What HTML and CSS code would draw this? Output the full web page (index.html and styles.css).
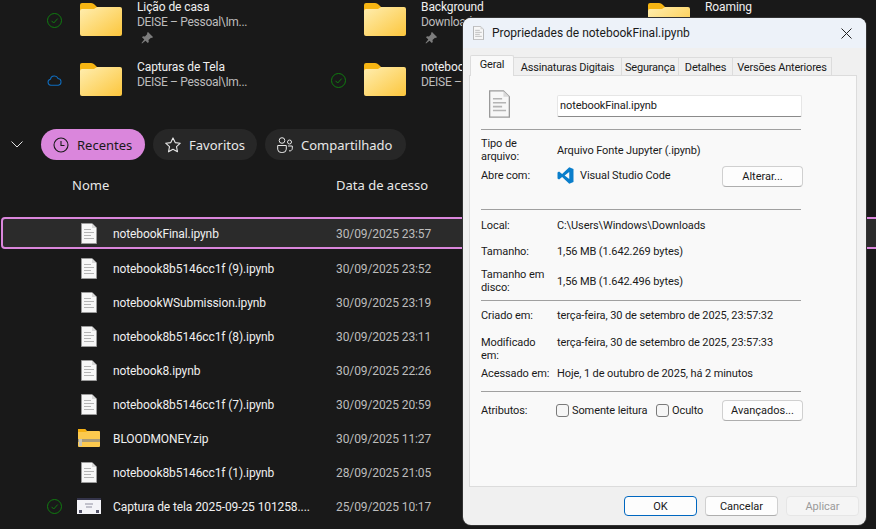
FILE: index.html
```html
<!DOCTYPE html>
<html lang="pt-BR">
<head>
    <meta charset="UTF-8">
    <meta name="viewport" content="width=device-width, initial-scale=1.0">
    <title>Propriedades de notebookFinal.ipynb</title>
    <link rel="stylesheet" href="styles.css">
</head>
<body>
    <!-- icones reutilizados -->
    <svg class="defs" width="0" height="0">
        <defs>
            <linearGradient id="folderFill" x1="0" y1="0" x2="1" y2="1">
                <stop offset="0" stop-color="#ffeeb0"/>
                <stop offset="1" stop-color="#fcc63c"/>
            </linearGradient>
            <symbol id="folder" viewBox="0 0 42 33">
                <path d="M0 2a2 2 0 0 1 2-2h9c2 0 3 1 4.500 2.500L17 4v6H0z" fill="#f6b513"/>
                <path d="M0 8a2 2 0 0 1 2-2l12 0 3-2h23a2 2 0 0 1 2 2v25a2 2 0 0 1-2 2H2a2 2 0 0 1-2-2z" fill="url(#folderFill)"/>
            </symbol>
            <symbol id="doc" viewBox="0 0 16 21">
                <path d="M.5.500h10.500l4.500 4.500v15.500H.5z" fill="#f7f7f7" stroke="#9a9a9a"/>
                <path d="M11 .5v4.500h4.500z" fill="#d8d8d8"/>
                <path d="M3 6.500h7M3 9.500h10M3 12.500h7M3 15.500h10" stroke="#b4b4b4" stroke-width="1.200"/>
            </symbol>
            <symbol id="synced" viewBox="0 0 15 15">
                <circle cx="7.500" cy="7.500" r="7" fill="none" stroke="#107c10"/>
                <path d="M4.500 7.800l2.200 2.200 4-4.400" fill="none" stroke="#107c10"/>
            </symbol>
            <symbol id="pin" viewBox="0 0 12 12">
                <path d="M7 0l5 5-1 1-1-.3-2.500 2.300.3 2-1 1-2.300-2.300L1 11.500l-.5-.5 2.800-3.500L1 5.200l1-1 2 .3L6.300 2 6 1z" fill="#7d7d7d"/>
            </symbol>
        </defs>
    </svg>

    <!-- pastas fixadas -->
    <section class="quick-grid">
        <div class="quick-item">
            <svg class="status"><use href="#synced"/></svg>
            <svg class="folder"><use href="#folder"/></svg>
            <div class="quick-text">
                <div class="quick-title">Lição de casa</div>
                <div class="quick-sub">DEISE – Pessoal\Im...</div>
                <svg class="pin"><use href="#pin"/></svg>
            </div>
        </div>
        <div class="quick-item">
            <span class="status"></span>
            <svg class="folder"><use href="#folder"/></svg>
            <div class="quick-text">
                <div class="quick-title">Background</div>
                <div class="quick-sub">Downloads</div>
                <svg class="pin"><use href="#pin"/></svg>
            </div>
        </div>
        <div class="quick-item">
            <span class="status"></span>
            <svg class="folder"><use href="#folder"/></svg>
            <div class="quick-text">
                <div class="quick-title">Roaming</div>
            </div>
        </div>
        <div class="quick-item">
            <svg class="status" viewBox="0 0 16 15">
                <path d="M4 12.500a3.200 3.200 0 0 1-.4-6.300 4.300 4.300 0 0 1 8.200-.8 3.600 3.600 0 0 1 .3 7.100z" fill="none" stroke="#0f6cbd" stroke-width="1.100"/>
            </svg>
            <svg class="folder"><use href="#folder"/></svg>
            <div class="quick-text">
                <div class="quick-title">Capturas de Tela</div>
                <div class="quick-sub">DEISE – Pessoal\Im...</div>
            </div>
        </div>
        <div class="quick-item">
            <svg class="status"><use href="#synced"/></svg>
            <svg class="folder"><use href="#folder"/></svg>
            <div class="quick-text">
                <div class="quick-title">notebooks</div>
                <div class="quick-sub">DEISE – Pessoal\Im...</div>
            </div>
        </div>
    </section>

    <!-- filtros -->
    <nav class="chips">
        <svg class="chevron" viewBox="0 0 12 7"><path d="M.5.500L6 6l5.500-5.500" fill="none" stroke="#e4e4e4"/></svg>
        <button class="chip chip-recent chip-active">
            <svg class="chip-icon" viewBox="0 0 16 16"><circle cx="8" cy="8" r="7" fill="none" stroke="currentColor" stroke-width="1.100"/><path d="M8 4v4.500h3.500" fill="none" stroke="currentColor" stroke-width="1.100"/></svg>
            Recentes
        </button>
        <button class="chip chip-fav">
            <svg class="chip-icon" viewBox="0 0 16 16"><path d="M8 .9l2.200 4.700 5.100.6-3.800 3.500 1 5.100L8 12.300l-4.500 2.500 1-5.100L.7 6.200l5.100-.6z" fill="none" stroke="currentColor" stroke-width="1.100" stroke-linejoin="round"/></svg>
            Favoritos
        </button>
        <button class="chip chip-shared">
            <svg class="chip-icon" viewBox="0 0 16 16"><circle cx="5" cy="3.500" r="2.800" fill="none" stroke="currentColor"/><circle cx="12.500" cy="5" r="2" fill="none" stroke="currentColor"/><path d="M.7 8.500h8.600v3.700a3.500 3.500 0 0 1-3.500 3.300H4.200a3.500 3.500 0 0 1-3.500-3.300zM11 9h4.300v2.200a2.500 2.500 0 0 1-3.300 2.600" fill="none" stroke="currentColor"/></svg>
            Compartilhado
        </button>
    </nav>

    <!-- lista de arquivos -->
    <div class="list-head">
        <span class="head-name">Nome</span>
        <span>Data de acesso</span>
    </div>
    <div class="file-list">
        <div class="file-row file-selected">
            <span class="status"></span>
            <span class="file-icon"><svg class="doc"><use href="#doc"/></svg></span>
            <span class="file-name">notebookFinal.ipynb</span>
            <span class="file-date">30/09/2025 23:57</span>
        </div>
        <div class="file-row">
            <span class="status"></span>
            <span class="file-icon"><svg class="doc"><use href="#doc"/></svg></span>
            <span class="file-name">notebook8b5146cc1f (9).ipynb</span>
            <span class="file-date">30/09/2025 23:52</span>
        </div>
        <div class="file-row">
            <span class="status"></span>
            <span class="file-icon"><svg class="doc"><use href="#doc"/></svg></span>
            <span class="file-name">notebookWSubmission.ipynb</span>
            <span class="file-date">30/09/2025 23:19</span>
        </div>
        <div class="file-row">
            <span class="status"></span>
            <span class="file-icon"><svg class="doc"><use href="#doc"/></svg></span>
            <span class="file-name">notebook8b5146cc1f (8).ipynb</span>
            <span class="file-date">30/09/2025 23:11</span>
        </div>
        <div class="file-row">
            <span class="status"></span>
            <span class="file-icon"><svg class="doc"><use href="#doc"/></svg></span>
            <span class="file-name">notebook8.ipynb</span>
            <span class="file-date">30/09/2025 22:26</span>
        </div>
        <div class="file-row">
            <span class="status"></span>
            <span class="file-icon"><svg class="doc"><use href="#doc"/></svg></span>
            <span class="file-name">notebook8b5146cc1f (7).ipynb</span>
            <span class="file-date">30/09/2025 20:59</span>
        </div>
        <div class="file-row">
            <span class="status"></span>
            <span class="file-icon">
                <svg class="zip" viewBox="0 0 22 18">
                    <path d="M0 1a1 1 0 0 1 1-1h6l2 2h12a1 1 0 0 1 1 1v14a1 1 0 0 1-1 1H1a1 1 0 0 1-1-1z" fill="#fcc94e"/>
                    <path d="M0 0h7l2 3H0z" fill="#f5b013"/>
                    <path d="M0 10h22v3H0z" fill="#a89a78"/>
                    <path d="M1 10h3v7H1z" fill="#c9c4b4"/>
                </svg>
            </span>
            <span class="file-name">BLOODMONEY.zip</span>
            <span class="file-date">30/09/2025 11:27</span>
        </div>
        <div class="file-row">
            <span class="status"></span>
            <span class="file-icon"><svg class="doc"><use href="#doc"/></svg></span>
            <span class="file-name">notebook8b5146cc1f (1).ipynb</span>
            <span class="file-date">28/09/2025 21:05</span>
        </div>
        <div class="file-row">
            <svg class="status"><use href="#synced"/></svg>
            <span class="file-icon">
                <svg class="thumb" viewBox="0 0 24 16">
                    <path d="M0 0h24v16H0z" fill="#f4f4f8"/>
                    <path d="M0 0h24v2H0z" fill="#34344a"/>
                    <path d="M2 12h3v3H2zM19 12h3v3h-3z" fill="#55556a"/>
                    <path d="M8 5h8v2H8zM9 8h6v2H9z" fill="#c2c2cc"/>
                </svg>
            </span>
            <span class="file-name">Captura de tela 2025-09-25 101258....</span>
            <span class="file-date">25/09/2025 10:17</span>
        </div>
    </div>

    <!-- janela de propriedades -->
    <div class="dialog">
        <div class="title-bar">
            <svg class="title-icon"><use href="#doc"/></svg>
            <span class="title-text">Propriedades de notebookFinal.ipynb</span>
            <svg class="close" viewBox="0 0 11 11"><path d="M.5.500l10 10M10.500.500l-10 10" stroke="#222" fill="none"/></svg>
        </div>
        <div class="tabs">
            <div class="tab tab-active">Geral</div>
            <div class="tab tab-sign">Assinaturas Digitais</div>
            <div class="tab tab-sec">Segurança</div>
            <div class="tab tab-det">Detalhes</div>
            <div class="tab tab-ver">Versões Anteriores</div>
        </div>
        <div class="panel">
            <div class="name-row">
                <svg class="big-doc"><use href="#doc"/></svg>
                <div class="name-input">notebookFinal.ipynb</div>
            </div>
            <hr class="sep sep-1">
            <div class="prop prop-type">
                <span class="prop-label">Tipo de arquivo:</span>
                <span>Arquivo Fonte Jupyter (.ipynb)</span>
            </div>
            <div class="prop prop-opens">
                <span class="prop-label">Abre com:</span>
                <span class="app">
                    <svg class="vscode" viewBox="0 0 100 100">
                        <path d="M72 2L30 41 12 27 3 32v36l9 5 18-14 42 39 25-10V12zM72 29v42L45 50z" fill="#0a7ecb" fill-rule="evenodd"/>
                    </svg>
                    Visual Studio Code
                </span>
                <button class="btn btn-side">Alterar...</button>
            </div>
            <hr class="sep sep-2">
            <div class="prop prop-local">
                <span class="prop-label">Local:</span>
                <span>C:\Users\Windows\Downloads</span>
            </div>
            <div class="prop prop-size">
                <span class="prop-label">Tamanho:</span>
                <span>1,56 MB (1.642.269 bytes)</span>
            </div>
            <div class="prop prop-disk">
                <span class="prop-label">Tamanho em disco:</span>
                <span>1,56 MB (1.642.496 bytes)</span>
            </div>
            <hr class="sep sep-3">
            <div class="prop prop-created">
                <span class="prop-label">Criado em:</span>
                <span>terça-feira, 30 de setembro de 2025, 23:57:32</span>
            </div>
            <div class="prop prop-modified">
                <span class="prop-label">Modificado em:</span>
                <span>terça-feira, 30 de setembro de 2025, 23:57:33</span>
            </div>
            <div class="prop prop-accessed">
                <span class="prop-label">Acessado em:</span>
                <span>Hoje, 1 de outubro de 2025, há 2 minutos</span>
            </div>
            <hr class="sep sep-4">
            <div class="prop prop-attrs">
                <span class="prop-label">Atributos:</span>
                <span class="checks">
                    <span class="check check-read"><i class="box"></i>Somente leitura</span>
                    <span class="check"><i class="box"></i>Oculto</span>
                </span>
                <button class="btn btn-side">Avançados...</button>
            </div>
        </div>
        <div class="dialog-foot">
            <button class="btn btn-foot btn-default">OK</button>
            <button class="btn btn-foot">Cancelar</button>
            <button class="btn btn-foot btn-disabled">Aplicar</button>
        </div>
    </div>
</body>
</html>
```

FILE: styles.css
```css
* {
    box-sizing: border-box;
}
body {
    margin: 0;
    height: 529px;
    overflow: hidden;
    position: relative;
    background: #191919;
    color: #e8e8e8;
    font-family: "Noto Sans", sans-serif;
    font-size: 13px;
}
.defs {
    position: absolute;
}
button {
    font-family: inherit;
}
.status {
    display: block;
    flex: none;
    width: 15px;
    height: 15px;
}

/* pastas fixadas */
.quick-grid {
    display: grid;
    grid-template-columns: repeat(3, 284px);
    grid-auto-rows: 60px;
    padding-left: 47px;
    height: 120px;
}
.quick-item {
    display: flex;
    align-items: flex-start;
}
.quick-item .status {
    margin-top: 13px;
}
.folder {
    flex: none;
    width: 42px;
    height: 33px;
    margin: 3px 15px 0 18px;
}
.quick-text {
    font-family: Roboto, sans-serif;
    font-size: 12px;
    white-space: nowrap;
}
.quick-title {
    height: 14px;
    line-height: 14px;
    letter-spacing: -0.1px;
    color: #f0f0f0;
}
.quick-sub {
    line-height: 17px;
    letter-spacing: -0.3px;
    color: #bdbdbd;
}
.pin {
    display: block;
    width: 12px;
    height: 12px;
    margin: 1px 0 0 4px;
}

/* filtros */
.chips {
    display: flex;
    align-items: center;
    gap: 8px;
    margin-top: 9px;
    padding-left: 11px;
    height: 31px;
}
.chevron {
    width: 12px;
    height: 7px;
    margin-right: 10px;
}
.chip {
    display: flex;
    align-items: center;
    gap: 8px;
    height: 31px;
    padding: 0 12px;
    border: none;
    border-radius: 16px;
    background: #272727;
    color: #e8e8e8;
    font-size: 13px;
    white-space: nowrap;
}
.chip-recent,
.chip-fav {
    width: 104px;
}
.chip-shared {
    width: 141px;
}
.chip-active {
    background: #da86dc;
    color: #1a1a1a;
}
.chip-icon {
    flex: none;
    width: 16px;
    height: 16px;
}

/* lista */
.list-head {
    display: flex;
    margin-top: 17px;
    height: 16px;
    line-height: 16px;
    padding-left: 72px;
}
.head-name {
    width: 264px;
}
.file-list {
    margin-top: 24px;
    font-family: Roboto, sans-serif;
    font-size: 12px;
    letter-spacing: -0.1px;
}
.file-row {
    display: flex;
    align-items: center;
    height: 34px;
    padding-left: 47px;
    white-space: nowrap;
}
.file-selected {
    height: 32px;
    margin: 0 -10px 2px 1px;
    padding-left: 44px;
    background: #2b2b2b;
    border: 2px solid #da86dc;
    border-radius: 4px;
}
.file-icon {
    display: flex;
    justify-content: center;
    flex: none;
    width: 24px;
    margin-left: 15px;
}
.doc {
    width: 16px;
    height: 21px;
}
.zip {
    width: 22px;
    height: 18px;
}
.thumb {
    width: 24px;
    height: 16px;
}
.file-name {
    width: 223px;
    margin-left: 12px;
    padding-top: 1px;
    color: #f0f0f0;
}
.file-date {
    padding-top: 1px;
    color: #bdbdbd;
}

/* janela */
.dialog {
    position: absolute;
    left: 463px;
    top: 18px;
    width: 403px;
    height: 507px;
    display: flex;
    flex-direction: column;
    background: #f0f0f0;
    border-radius: 8px;
    box-shadow: 0 0 0 1px #333;
    overflow: hidden;
    color: #1a1a1a;
    font-family: Roboto, sans-serif;
    font-size: 11px;
    letter-spacing: -0.1px;
}
.title-bar {
    display: flex;
    align-items: center;
    flex: none;
    height: 30px;
    padding: 0 10px;
    background: #edf2f9;
}
.title-icon {
    width: 11px;
    height: 14px;
    flex: none;
}
.title-text {
    flex: 1;
    margin-left: 8px;
    font-size: 12px;
    letter-spacing: 0;
}
.close {
    width: 11px;
    height: 11px;
    margin-right: 4px;
}
.tabs {
    display: flex;
    align-items: flex-end;
    flex: none;
    height: 28px;
    padding: 0 0 0 7px;
    margin-bottom: -1px;
}
.tab {
    height: 19px;
    line-height: 19px;
    text-align: center;
    letter-spacing: -0.2px;
    background: #f0f0f0;
    border: 1px solid #dcdcdc;
    border-left: none;
    white-space: nowrap;
}
.tab-active {
    position: relative;
    z-index: 1;
    width: 44px;
    height: 21px;
    line-height: 18px;
    background: #f9f9f9;
    border-left: 1px solid #dcdcdc;
    border-bottom: none;
    border-radius: 2px 2px 0 0;
}
.tab-sign {
    width: 108px;
}
.tab-sec {
    width: 57px;
}
.tab-det {
    width: 54px;
}
.tab-ver {
    width: 99px;
}
.panel {
    flex: none;
    height: 412px;
    margin: 0 9px 0 6px;
    padding: 14px 0 0 11px;
    background: #f9f9f9;
    border: 1px solid #dcdcdc;
}
.name-row {
    display: flex;
    height: 28px;
}
.big-doc {
    width: 21px;
    height: 28px;
    margin-left: 8px;
}
.name-input {
    width: 245px;
    height: 22px;
    margin: 5px 0 0 47px;
    padding-left: 2px;
    line-height: 20px;
    background: #fff;
    border: 1px solid #e6e6e6;
    border-bottom-color: #8a8a8a;
    border-radius: 2px;
}
.sep {
    width: 320px;
    height: 1px;
    margin: 0;
    border: none;
    background: #a0a0a0;
}
.sep-1 {
    margin-top: 11px;
}
.sep-2 {
    margin-top: 22px;
}
.sep-3 {
    margin-top: 6px;
}
.sep-4 {
    margin-top: 10px;
}
.prop {
    display: flex;
    align-items: center;
    line-height: 13px;
    min-height: 16px;
}
.prop-label {
    flex: none;
    width: 76px;
    padding-right: 6px;
}
.prop-type {
    margin-top: 7px;
}
.prop-opens {
    margin-top: 3px;
    height: 21px;
}
.prop-opens .prop-label,
.prop-opens .app {
    margin-top: -3px;
}
.prop-local {
    margin-top: 7px;
}
.prop-size {
    margin-top: 10px;
}
.prop-disk {
    margin-top: 9px;
}
.prop-created {
    margin-top: 6px;
}
.prop-modified {
    margin-top: 13px;
    align-items: flex-start;
}
.prop-accessed {
    margin-top: 3px;
}
.prop-attrs {
    margin-top: 8px;
    height: 21px;
}
.app {
    display: flex;
    align-items: center;
    gap: 6px;
    width: 165px;
}
.vscode {
    width: 17px;
    height: 17px;
}
.checks {
    display: flex;
    width: 165px;
    margin-left: -1px;
    margin-right: 1px;
    white-space: nowrap;
}
.check {
    display: flex;
    align-items: center;
    gap: 3px;
}
.check-read {
    width: 100px;
}
.box {
    width: 13px;
    height: 13px;
    background: #f6f6f6;
    border: 1px solid #7a7a7a;
    border-radius: 3px;
}
.btn {
    height: 21px;
    padding: 0;
    background: #fdfdfd;
    border: 1px solid #d0d0d0;
    border-bottom-color: #aeaeae;
    border-radius: 4px;
    color: #1a1a1a;
    font-size: 11px;
}
.btn-side {
    width: 81px;
}
.dialog-foot {
    display: flex;
    justify-content: flex-end;
    gap: 8px;
    padding: 9px 7px 0 0;
}
.btn-foot {
    width: 73px;
    height: 20px;
}
.btn-default {
    border: 1px solid #0067c0;
}
.btn-disabled {
    background: #f5f5f5;
    border-color: #e6e6e6;
    color: #9a9a9a;
}
```
